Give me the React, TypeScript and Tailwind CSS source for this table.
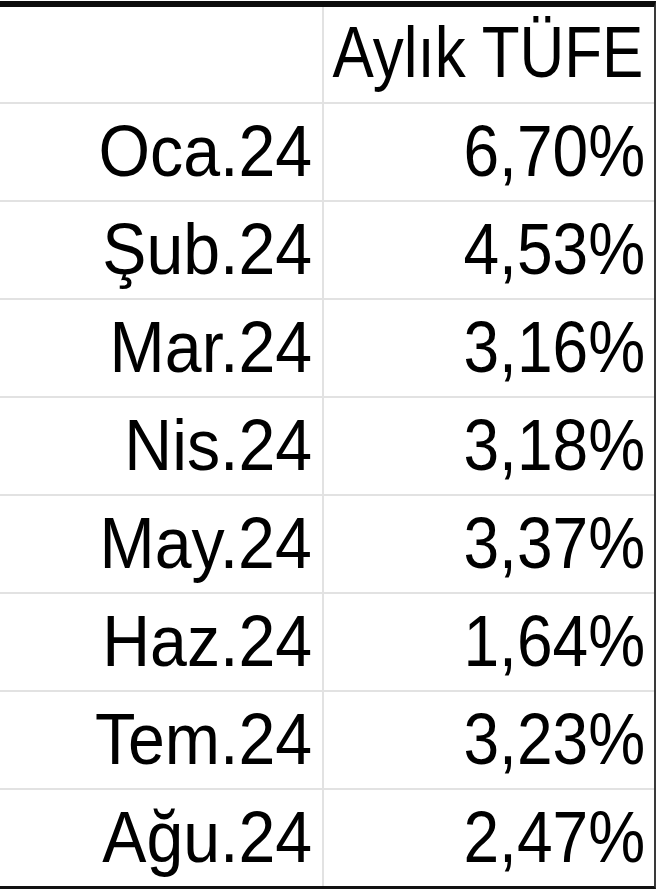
import React from 'react'

const rows: [string, string][] = [
  ['Oca.24', '6,70%'],
  ['Şub.24', '4,53%'],
  ['Mar.24', '3,16%'],
  ['Nis.24', '3,18%'],
  ['May.24', '3,37%'],
  ['Haz.24', '1,64%'],
  ['Tem.24', '3,23%'],
  ['Ağu.24', '2,47%'],
]

const font = { fontFamily: '"Liberation Sans", Arial, sans-serif' }

export default function App() {
  return (
    <div className="w-[658px] h-[890px] bg-white pt-px text-black" style={font}>
      <div className="w-[656px] border-t-[6px] border-t-[#0d0d0d] border-r-2 border-r-[#3a3a3a] border-b-[3px] border-b-[#111]">
        {/* header */}
        <div className="grid grid-cols-[324px_330px] h-[95px]">
          <div className="border-r-2 border-r-[#e2e2e2]" />
          <div className="flex items-center justify-end pr-[11px] pb-[6px] text-[72px] leading-none whitespace-nowrap">
            <span className="inline-block origin-right scale-x-[0.86]">Aylık TÜFE</span>
          </div>
        </div>

        {rows.map(([month, value]) => (
          <div
            key={month}
            className="grid grid-cols-[324px_330px] h-[98px] border-t-2 border-t-[#e2e2e2]"
          >
            <div className="flex items-center justify-end pr-[10px] pb-[3px] border-r-2 border-r-[#e2e2e2] text-[72px] leading-none">
              <span className="inline-block origin-right scale-x-[0.92]">{month}</span>
            </div>
            <div className="flex items-center justify-end pr-[9px] pb-[3px] text-[72px] leading-none">
              <span className="inline-block origin-right scale-x-[0.89]">{value}</span>
            </div>
          </div>
        ))}
      </div>
    </div>
  )
}
